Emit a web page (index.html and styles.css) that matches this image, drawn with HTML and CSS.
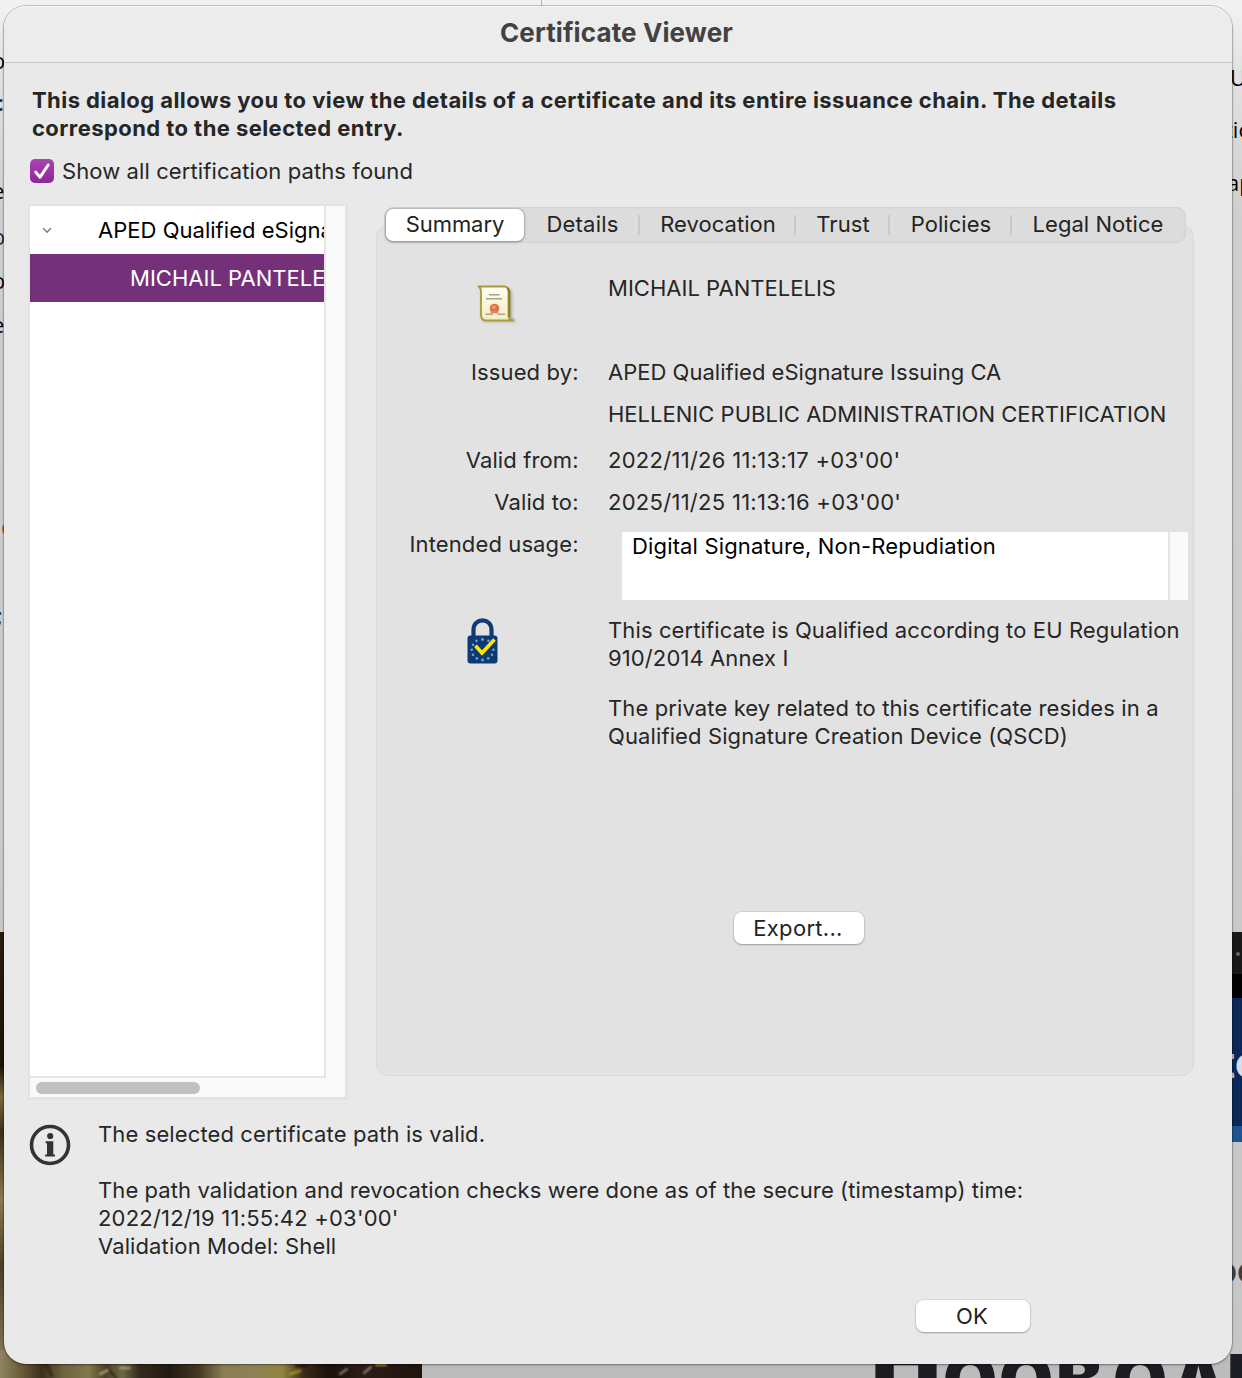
FILE: index.html
```html
<!DOCTYPE html>
<html lang="en">
<head>
<meta charset="utf-8">
<title>Certificate Viewer</title>
<link rel="stylesheet" href="styles.css">
</head>
<body>
<svg class="desktop" width="1242" height="1378" viewBox="0 0 1242 1378" aria-hidden="true">
  <defs>
    <linearGradient id="page" x1="0" y1="0" x2="0" y2="1">
      <stop offset="0" stop-color="#f4f4f4"/>
      <stop offset=".05" stop-color="#e2e2e2"/>
      <stop offset=".16" stop-color="#cfcfcf"/>
      <stop offset="1" stop-color="#c6c6c6"/>
    </linearGradient>
    <linearGradient id="floor" x1="0" y1="0" x2="1" y2="0">
      <stop offset="0" stop-color="#8f8462"/>
      <stop offset=".05" stop-color="#6a5c38"/>
      <stop offset=".1" stop-color="#3c2f1b"/>
      <stop offset=".15" stop-color="#6f6340"/>
      <stop offset=".21" stop-color="#83774c"/>
      <stop offset=".25" stop-color="#4c412a"/>
      <stop offset=".29" stop-color="#6f6748"/>
      <stop offset=".33" stop-color="#362a1d"/>
      <stop offset=".4" stop-color="#1f1b12"/>
      <stop offset=".47" stop-color="#453720"/>
      <stop offset=".53" stop-color="#8a7f55"/>
      <stop offset=".6" stop-color="#8d8256"/>
      <stop offset=".67" stop-color="#8e8540"/>
      <stop offset=".72" stop-color="#3b2a18"/>
      <stop offset=".78" stop-color="#1c110c"/>
      <stop offset=".86" stop-color="#2c1c16"/>
      <stop offset="1" stop-color="#20140f"/>
    </linearGradient>
    <linearGradient id="wall" x1="0" y1="0" x2="0" y2="1">
      <stop offset="0" stop-color="#2a1d0e"/>
      <stop offset=".3" stop-color="#1c1208"/>
      <stop offset=".37" stop-color="#7a6a3c"/>
      <stop offset=".45" stop-color="#3c2f16"/>
      <stop offset=".6" stop-color="#8a7a50"/>
      <stop offset=".75" stop-color="#4c4024"/>
      <stop offset="1" stop-color="#8f8462"/>
    </linearGradient>
  </defs>
  <rect width="1242" height="1378" fill="url(#page)"/>
  <rect width="1242" height="6" fill="#f1f1f1"/>
  <rect x="541" width="1" height="6" fill="#b5b5b5"/>
  <rect x="422" y="1358" width="820" height="20" fill="#bcbcbc"/>
  <rect y="932" width="30" height="446" fill="url(#wall)"/>
  <rect y="1350" width="422" height="28" fill="url(#floor)"/>
  <g class="leaves" fill="none" stroke-width="2" stroke-linecap="round">
    <path d="M46 1364 52 1376M108 1368 116 1378" stroke="#2c2212"/>
    <path d="M100 1374 108 1370M120 1368H130" stroke="#b0a478"/>
    <path d="M340 1374 347 1369M364 1373 371 1367" stroke="#9b9177"/>
    <path d="M376 1365H386M290 1374 300 1371" stroke="#aba02f"/>
    <path d="M296 1366H306M318 1365H330" stroke="#1c110c"/>
  </g>
  <g class="desktop-text">
    <text x="-8" y="69">o</text>
    <text x="-8" y="111" fill="#0c2742" font-weight="700">c</text>
    <text x="-8" y="199">e</text>
    <text x="-8" y="245" fill="#0c2742">o</text>
    <text x="-8" y="289">o</text>
    <text x="-8" y="333">e</text>
    <text x="1" y="535" fill="#a86512">c</text>
    <text x="-3" y="624" fill="#0d1f5c">;</text>
    <text x="1230" y="86">U</text>
    <text x="1225" y="138">tio</text>
    <text x="1227" y="191">ap</text>
  </g>
  <rect x="1222" y="932" width="20" height="42" fill="#191919"/>
  <circle cx="1238" cy="954" r="2" fill="#666"/>
  <rect x="1222" y="974" width="20" height="24" fill="#000"/>
  <rect x="1222" y="998" width="20" height="128" fill="#0c2858"/>
  <rect x="1222" y="1126" width="20" height="16" fill="#20548f"/>
  <text class="desktop-banner" x="1219" y="1078">tc</text>
  <text class="desktop-link" x="1215" y="1283">oc</text>
  <text class="desktop-heading" y="1405" x="871" textLength="70" lengthAdjust="spacingAndGlyphs">Π</text>
  <text class="desktop-heading" y="1405" x="943 999 1056 1113 1171 1227">ΟΟΒΟΑΠ</text>
</svg>

<main class="dialog">
  <header class="titlebar">Certificate Viewer</header>
  <section class="top">
    <p class="intro">This dialog allows you to view the details of a certificate and its entire issuance chain. The details<br>correspond to the selected entry.</p>
    <label class="check">
      <svg width="24" height="24" viewBox="0 0 24 24">
        <defs><linearGradient id="tick" x1="0" y1="0" x2="0" y2="1"><stop offset="0" stop-color="#a846b1"/><stop offset="1" stop-color="#8d2698"/></linearGradient></defs>
        <rect width="24" height="24" rx="5" fill="url(#tick)"/>
        <path d="M5.800 13.200 10.100 18.200 18.200 6" fill="none" stroke="#fff" stroke-width="3" stroke-linecap="round" stroke-linejoin="round"/>
      </svg>
      <span>Show all certification paths found</span>
    </label>
  </section>

  <section class="columns">
    <div class="tree">
      <div class="tree-list">
        <div class="tree-row">
          <svg class="chevron" width="10" height="8" viewBox="0 0 10 8"><path d="M1.500 2.500 5 6.300 8.500 2.500" fill="none" stroke="#808080" stroke-width="1.500" stroke-linecap="round" stroke-linejoin="round"/></svg>
          <span>APED Qualified eSignature Issuing CA</span>
        </div>
        <div class="tree-row selected"><span>MICHAIL PANTELELIS</span></div>
      </div>
      <div class="tree-vbar"></div>
      <div class="tree-hbar"><div class="thumb"></div></div>
    </div>

    <div class="tabs">
      <nav class="tabbar">
        <span class="tab active">Summary</span>
        <span class="tab details">Details</span>
        <span class="tab revocation">Revocation</span>
        <span class="tab trust">Trust</span>
        <span class="tab policies">Policies</span>
        <span class="tab legal">Legal Notice</span>
      </nav>
      <div class="panel">
        <div class="row subject">
          <svg class="icon-cert" width="42" height="42" viewBox="0 0 42 42">
            <defs><linearGradient id="paper" x1="0" y1="0" x2="0" y2="1"><stop offset="0" stop-color="#fffef5"/><stop offset="1" stop-color="#f5edc0"/></linearGradient></defs>
            <path class="cert-shadow" d="M5 4H33L36 8V34L41 38H8L5 34Z" fill="#000"/>
            <path d="M2.500 2.500H29.500Q32 3.500 32.500 7V33Q33.500 36 37 36.300H9Q5.200 35.500 5 31V7Q4.800 4 2.500 2.500Z" fill="url(#paper)" stroke="#a89a34" stroke-width="1.800" stroke-linejoin="round"/>
            <path d="M31 4Q33.300 5 33.300 8V33" fill="none" stroke="#8d7d20" stroke-width="2"/>
            <path d="M13 10.700H23.500M10 14.700H26" stroke="#a3a290" stroke-width="1.500"/>
            <path d="M9.500 30.300H17M22 30.300H29" stroke="#a8a58c" stroke-width="1.500"/>
            <circle cx="18.500" cy="24.500" r="4.800" fill="#e0714d"/>
            <circle cx="17.800" cy="23.200" r="1.800" fill="#ef9a7c"/>
            <path d="M15 27 14.500 30 18.500 28.500 22.500 30 22 27Z" fill="#de8465"/>
          </svg>
          <div class="value caps">MICHAIL PANTELELIS</div>
        </div>
        <div class="row issuer"><div class="label">Issued by:</div><div class="value caps">APED Qualified eSignature Issuing CA</div></div>
        <div class="row org"><div class="label"></div><div class="value caps">HELLENIC PUBLIC ADMINISTRATION CERTIFICATION</div></div>
        <div class="row from"><div class="label">Valid from:</div><div class="value date">2022/11/26 11:13:17 +03'00'</div></div>
        <div class="row to"><div class="label">Valid to:</div><div class="value date">2025/11/25 11:13:16 +03'00'</div></div>
        <div class="row usage">
          <div class="label">Intended usage:</div>
          <div class="usage-box"><div class="usage-text">Digital Signature, Non-Repudiation</div><div class="usage-bar"></div></div>
        </div>
        <div class="row qualified">
          <svg class="icon-lock" width="34" height="46" viewBox="0 0 34 46">
            <path d="M7.500 21V12C7.500 -.8 25.500 -.8 25.500 12V21" fill="none" stroke="#123b72" stroke-width="4.200"/>
            <rect x="1.500" y="17.500" width="30" height="28" rx="3" fill="#0c3a73"/>
            <g fill="#7f9dbd"><circle cx="16.500" cy="21.500" r="1.400"/><circle cx="10.500" cy="22.800" r="1.300"/><circle cx="7" cy="26.800" r="1.300"/><circle cx="5.800" cy="31.800" r="1.300"/><circle cx="7" cy="36.800" r="1.300"/><circle cx="10.800" cy="40.400" r="1.300"/><circle cx="16.500" cy="42" r="1.400"/><circle cx="22.200" cy="40.400" r="1.300"/><circle cx="26" cy="36.800" r="1.300"/><circle cx="27.400" cy="31.800" r="1.300"/><circle cx="22.500" cy="22.800" r="1.300"/></g>
            <path d="M9.500 27.800 16 35 28.500 21.500" fill="none" stroke="#ffe600" stroke-width="3.600"/>
          </svg>
          <div class="value">
            <p>This certificate is Qualified according to EU Regulation<br>910/2014 Annex I</p>
            <p>The private key related to this certificate resides in a<br>Qualified Signature Creation Device (QSCD)</p>
          </div>
        </div>
        <button class="btn export">Export...</button>
      </div>
    </div>
  </section>

  <section class="status">
    <svg width="42" height="42" viewBox="0 0 42 42">
      <circle cx="21" cy="21" r="18.500" fill="none" stroke="#333" stroke-width="3.600"/>
      <circle cx="21.200" cy="12" r="3.100" fill="#333"/>
      <path d="M16.600 17.300H24.300V30.600H26V32.500H16.200V30.600H18V19.200H16.600Z" fill="#333"/>
    </svg>
    <div>
      <p>The selected certificate path is valid.</p>
      <p class="gap"><span class="checks">The path validation and revocation checks were done as of the secure (timestamp) time:</span><br><span class="secure-time">2022/12/19 11:55:42 +03'00'</span><br>Validation Model: Shell</p>
    </div>
  </section>
  <footer class="actions"><button class="btn ok">OK</button></footer>
</main>
</body>
</html>
```
FILE: styles.css
```css
* { box-sizing: border-box; }
body {
  margin: 0;
  width: 1242px;
  height: 1378px;
  overflow: hidden;
  position: relative;
  padding: 6px 10px 14px 4px;
  background: #c9c9c9;
  color: #262626;
  font: 400 22px/28px Inter, "Liberation Sans", sans-serif;
  letter-spacing: .115px;
}
p { margin: 0; }
svg { display: block; flex: none; }

/* Windows behind the dialog */
.desktop { position: absolute; left: 0; top: 0; }
.leaves { filter: blur(1px); }
.desktop-text { font: 22px "Open Sans", sans-serif; letter-spacing: 0; }
.desktop-banner { font: 700 44px Inter, sans-serif; fill: #dcdcdc; letter-spacing: 0; }
.desktop-link { font: 700 36px Inter, sans-serif; fill: #3d3e42; letter-spacing: 0; }
.desktop-heading { font: 900 70px Inter, sans-serif; fill: #1c1d22; letter-spacing: 0; }

.dialog {
  position: relative;
  display: flex;
  flex-direction: column;
  width: 1228px;
  height: 1358px;
  background: #e9e9e9;
  border-radius: 22px;
  box-shadow: 0 0 0 1px rgba(0, 0, 0, .17), 0 1px 3px rgba(0, 0, 0, .3);
}
.titlebar {
  height: 57px;
  flex: none;
  padding-right: 3px;
  background: #ececec;
  border-bottom: 1px solid #c6c6c6;
  border-radius: 22px 22px 0 0;
  box-shadow: inset 0 1px 0 #f6f6f6;
  color: #424242;
  font-size: 26px;
  font-weight: 700;
  line-height: 54px;
  text-align: center;
}

.top { padding: 23px 0 0 28px; height: 142px; flex: none; }
.intro { font-weight: 700; letter-spacing: .43px; white-space: nowrap; }
.check { display: flex; align-items: center; gap: 8px; height: 28px; margin: 15px 0 0 -2px; letter-spacing: .1px; }

.columns { display: flex; flex: none; gap: 28px; padding-left: 24px; height: 896px; }

.tree {
  display: grid;
  grid-template: 872px 19px / 296px 19px;
  width: 320px;
  height: 896px;
  border: 2px solid #e3e3e3;
  border-right-width: 3px;
  border-bottom-width: 3px;
  margin-top: -1px;
  background: #fafafa;
}
.tree-list {
  overflow: hidden;
  background: #fff;
  border-right: 2px solid #e5e5e5;
  border-bottom: 2px solid #e5e5e5;
  color: #000;
}
.tree-row {
  display: flex;
  align-items: center;
  height: 48px;
  padding-left: 12px;
  white-space: nowrap;
  letter-spacing: .025px;
}
.chevron { margin-right: 46px; }
.tree-row.selected { padding-left: 100px; background: #743179; color: #fff; }
.tree-hbar { grid-column: 1 / 3; padding: 4px 6px; }
.thumb { width: 164px; height: 12px; border-radius: 6px; background: #c1c1c1; }

.tabs { width: 818px; padding-top: 2px; }
.tabbar {
  position: relative;
  z-index: 1;
  display: flex;
  width: 802px;
  height: 36px;
  margin: 0 0 -18px 8px;
  padding: 2px 0 2px 2px;
  border-radius: 10px;
  background: #dcdcdc;
  box-shadow: inset 0 0 0 1px #d3d3d3, inset 0 0 3px 1px #d8d8d8;
  color: #232323;
  letter-spacing: .04px;
}
.tab {
  position: relative;
  height: 32px;
  line-height: 31px;
  text-align: center;
  white-space: nowrap;
}
.tab.active {
  width: 138px;
  margin-right: 1px;
  background: #fff;
  border-radius: 7px;
  letter-spacing: -.05px;
  box-shadow: 0 0 1px 1px rgba(0, 0, 0, .12), 0 1px 3px rgba(0, 0, 0, .3);
}
.details { width: 115px; letter-spacing: .2px; }
.revocation { width: 156px; }
.trust { width: 94px; }
.policies { width: 122px; }
.legal { width: 172px; }
.details::after, .revocation::after, .trust::after, .policies::after {
  content: "";
  position: absolute;
  right: 0;
  top: 6px;
  width: 2px;
  height: 20px;
  background: #c9c9c9;
}

.panel {
  display: flex;
  flex-direction: column;
  height: 851px;
  padding-top: 48px;
  background: #e2e2e2;
  border: 1px solid #d9d9d9;
  border-radius: 12px;
}
.row { display: grid; grid-template-columns: 201px 1fr; column-gap: 30px; flex: none; }
.label { text-align: right; margin-right: -.6px; }
.value, .usage-text { white-space: nowrap; }
.caps { letter-spacing: .02px; }
.date { letter-spacing: .28px; }
.checks { letter-spacing: .09px; }
.secure-time { letter-spacing: .2px; }
.subject { height: 84px; }
.issuer, .from, .to { height: 42px; }
.org { height: 46px; }
.usage { height: 86px; grid-template-columns: 201px 566px; column-gap: 44px; }
.usage-box { display: flex; width: 566px; height: 68px; margin-top: 2px; background: #fff; }
.usage-text { width: 546px; padding-left: 10px; color: #000; letter-spacing: .15px; }
.usage-bar { width: 20px; background: #fafafa; border-left: 2px solid #e5e5e5; }
.icon-cert { margin: 10px 0 0 99px; }
.cert-shadow { opacity: .25; filter: blur(1.5px); }
.icon-lock { margin: 2px 0 0 89px; }
.qualified p + p { margin-top: 22px; }

.btn {
  height: 32px;
  padding: 0;
  border: 0;
  border-radius: 8px;
  background: #fff;
  color: #232323;
  font: inherit;
  line-height: 32px;
  letter-spacing: .3px;
  box-shadow: 0 0 0 1px rgba(0, 0, 0, .06), 0 1px 2px rgba(0, 0, 0, .28);
}
.export { width: 130px; padding-right: 2px; margin: 162px 0 0 357px; flex: none; }

.status { display: flex; flex: none; gap: 27px; height: 180px; padding: 19px 0 0 25px; }
.status svg { margin-top: 4px; }
.gap { margin-top: 28px; }
.actions { padding: 19px 0 0 912px; }
.ok { width: 114px; padding-right: 2px; }
```
